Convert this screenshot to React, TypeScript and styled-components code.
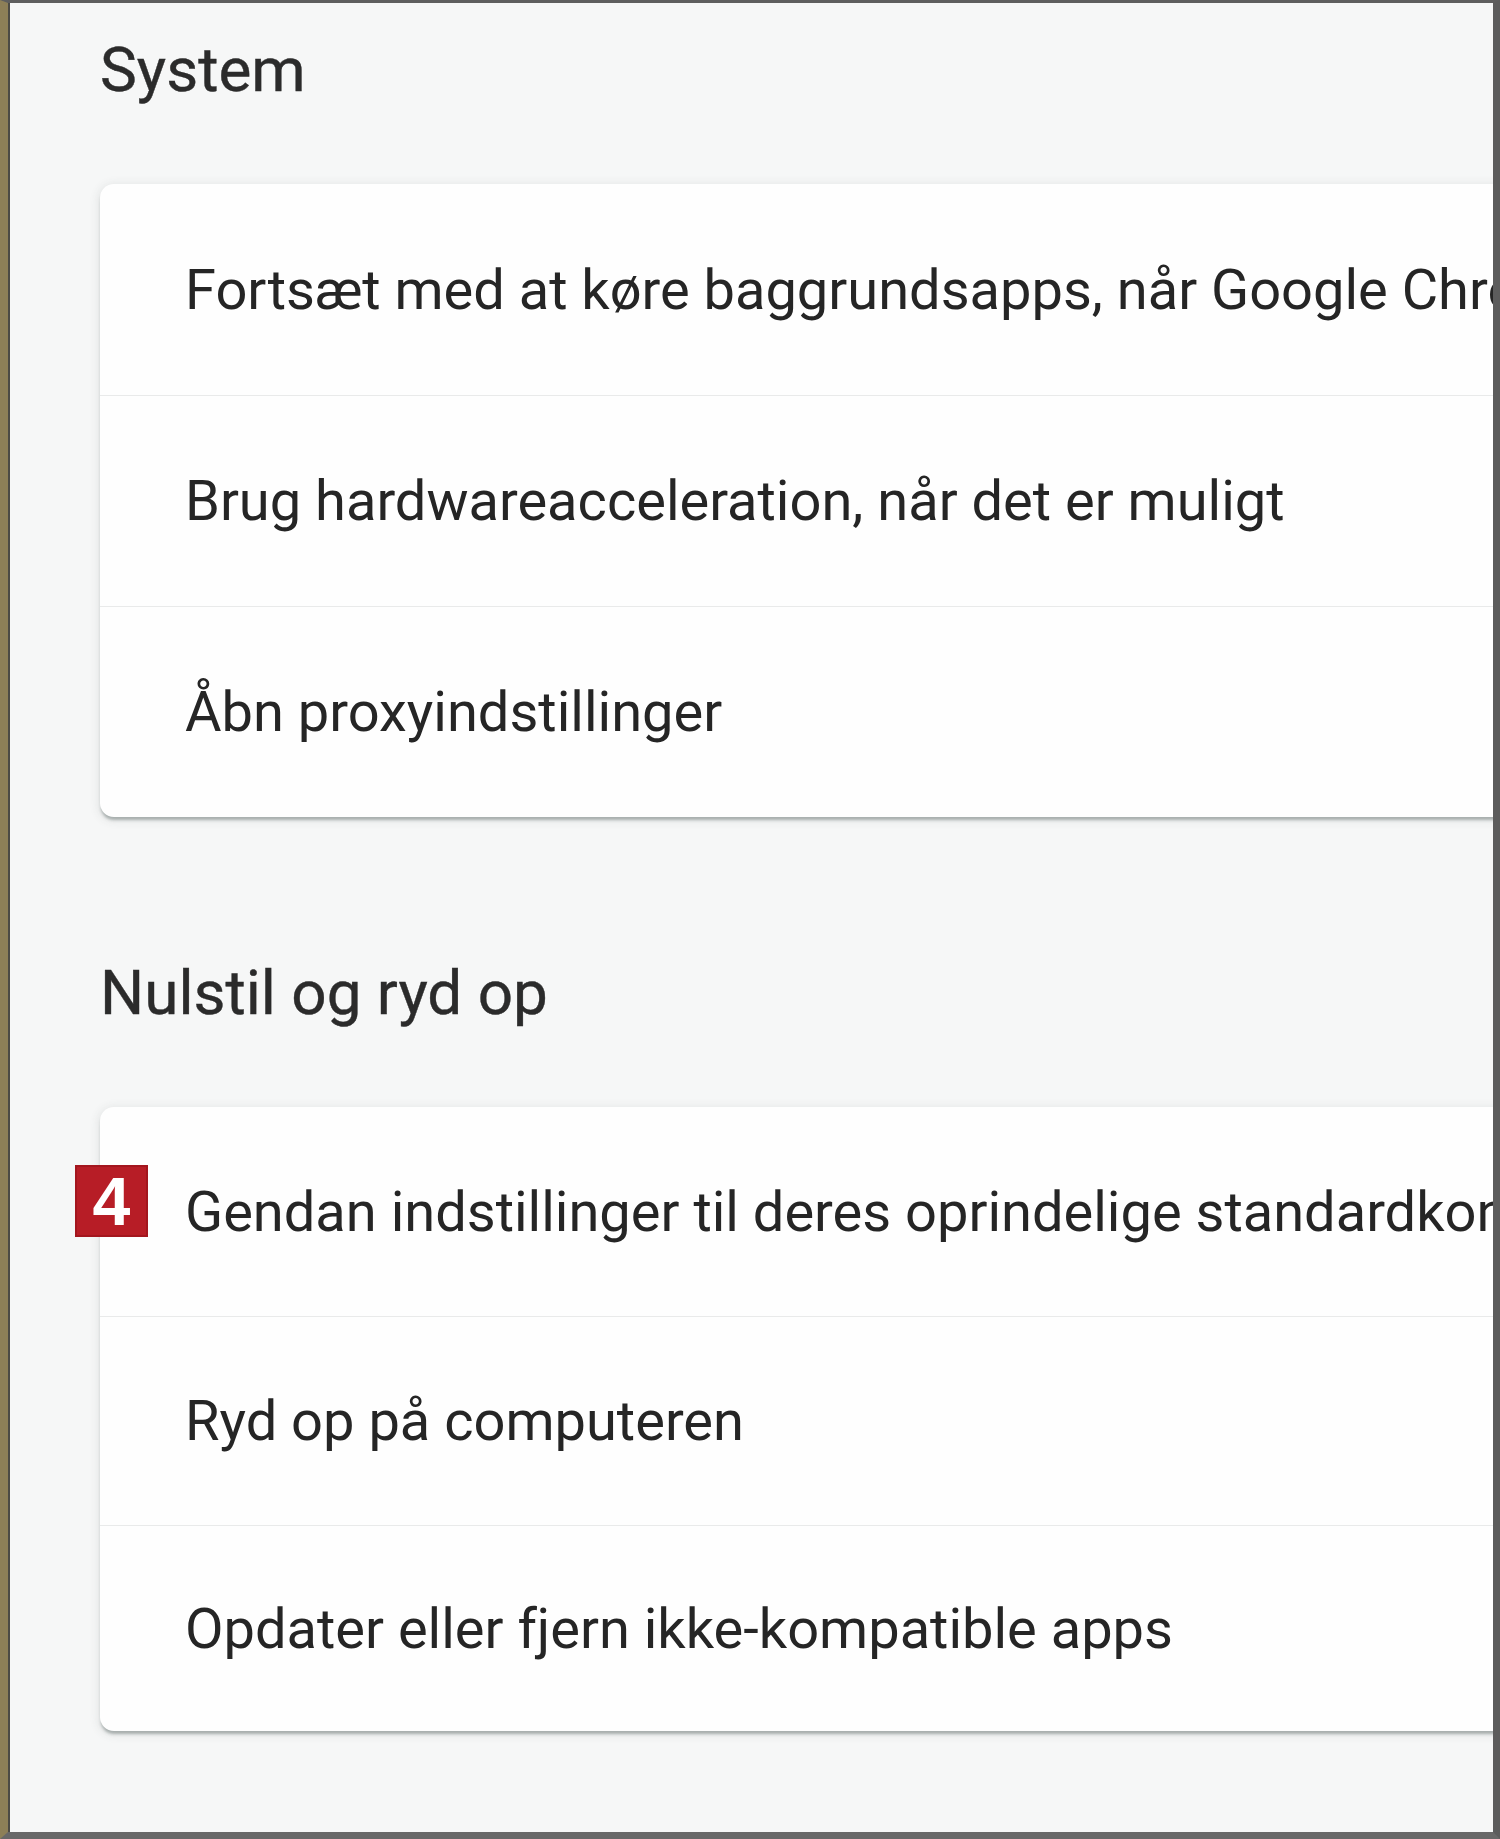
import React from "react";
import styled, { createGlobalStyle } from "styled-components";

const Global = createGlobalStyle`
  html, body { margin: 0; padding: 0; background: #f6f7f7; }
  body { font-family: Roboto, "Noto Sans", Arial, sans-serif; }
`;

const Frame = styled.div`
  box-sizing: border-box;
  width: 1500px;
  height: 1839px;
  border-top: 3px solid #5e5e5e;
  border-left: 8px solid #8d7f57;
  border-right: 7px solid #5c5c5c;
  border-bottom: 7px solid #686868;
  background: #f6f7f7;
  box-shadow: inset 2px 0 0 #4c4a44;
  overflow: hidden;
`;

const Content = styled.div`
  padding-left: 92px;
  display: flex;
  flex-direction: column;
`;

const Section = styled.section<{ $gapTop: number }>`
  margin-top: ${(p) => p.$gapTop}px;
  display: flex;
  flex-direction: column;
`;

const Heading = styled.h2`
  margin: 0 0 47px 0;
  height: 134px;
  line-height: 134px;
  font-family: Roboto, Arial, sans-serif;
  font-size: 62px;
  font-weight: 400;
  color: #2b2b2b;
  -webkit-text-stroke: 0.4px #2b2b2b;
  white-space: nowrap;
`;

const Card = styled.div`
  position: relative;
  width: 1500px;
  background: #fefefe;
  border-radius: 14px;
  box-shadow: 0 4px 3px -1px rgba(90, 105, 102, 0.45),
    0 2px 10px 2px rgba(60, 64, 67, 0.1);
  display: flex;
  flex-direction: column;
`;

const Row = styled.div<{ $first?: boolean; $h: number }>`
  box-sizing: border-box;
  height: ${(p) => p.$h}px;
  display: flex;
  align-items: center;
  padding-left: 85px;
  border-top: ${(p) => (p.$first ? "none" : "1px solid #e9eaea")};
  font-family: Roboto, Arial, sans-serif;
  font-size: 56px;
  color: #252525;
  white-space: nowrap;
  overflow: hidden;
`;

const Badge = styled.div`
  position: absolute;
  left: -25px;
  top: 58px;
  width: 73px;
  height: 72px;
  box-sizing: border-box;
  background: #b71d26;
  border: 2px solid #a3161e;
  display: flex;
  align-items: center;
  justify-content: center;
  color: #ffffff;
  font-family: "Liberation Sans", Arial, sans-serif;
  font-weight: 700;
  font-size: 68px;
  line-height: 1;
`;

const systemRows = [
  "Fortsæt med at køre baggrundsapps, når Google Chrome er lukket",
  "Brug hardwareacceleration, når det er muligt",
  "Åbn proxyindstillinger",
];

const resetRows = [
  "Gendan indstillinger til deres oprindelige standardkonfiguration",
  "Ryd op på computeren",
  "Opdater eller fjern ikke-kompatible apps",
];

export default function App() {
  return (
    <>
      <Global />
      <Frame>
        <Content>
          <Section $gapTop={0}>
            <Heading>System</Heading>
            <Card>
              {systemRows.map((t, i) => (
                <Row key={t} $first={i === 0} $h={211}>
                  {t}
                </Row>
              ))}
            </Card>
          </Section>
          <Section $gapTop={109}>
            <Heading>Nulstil og ryd op</Heading>
            <Card>
              <Badge>4</Badge>
              {resetRows.map((t, i) => (
                <Row key={t} $first={i === 0} $h={i === 2 ? 206 : 209}>
                  {t}
                </Row>
              ))}
            </Card>
          </Section>
        </Content>
      </Frame>
    </>
  );
}
